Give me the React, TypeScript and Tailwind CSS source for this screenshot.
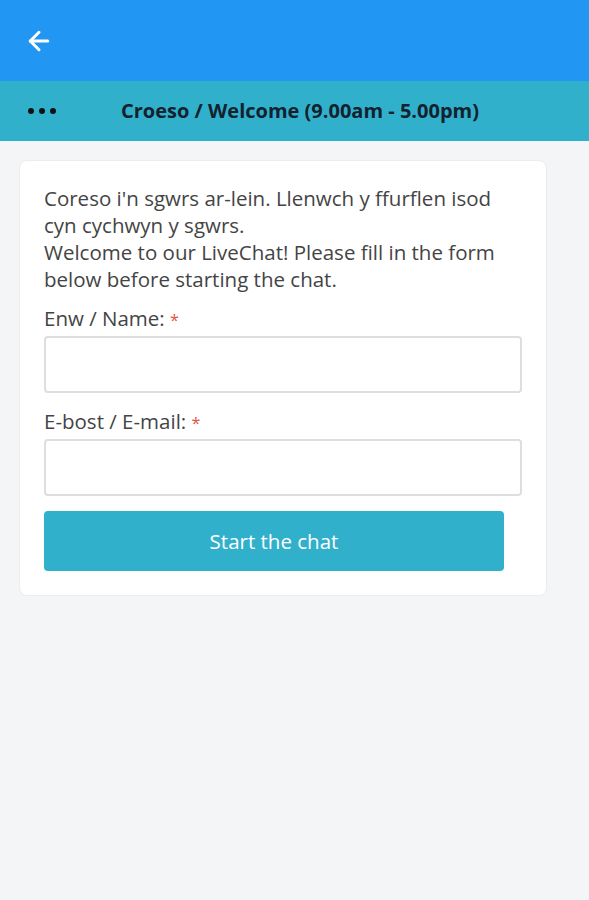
import { ArrowLeft } from 'lucide-react';

function Field({ label }: { label: string }) {
  return (
    <div className="flex flex-col">
      <label className="h-[27px] text-[20.5px] leading-[27px] text-[#444]">
        {label} <span className="text-[16px] leading-none text-[#e5533d]">*</span>
      </label>
      <input
        type="text"
        className="mt-[4px] h-[57px] w-full rounded-[4px] border-2 border-[#dedede] bg-white px-3 outline-none"
      />
    </div>
  );
}

export default function App() {
  return (
    <div className="min-h-[900px] bg-[#f4f5f7]" style={{ fontFamily: '"Open Sans", "Noto Sans", sans-serif' }}>
      {/* App bar */}
      <div className="flex h-[81px] items-center bg-[#2196f3] pl-[24px]">
        <ArrowLeft className="h-[30px] w-[30px] text-white" strokeWidth={2.4} />
      </div>

      {/* Chat header */}
      <div className="flex h-[60px] items-center bg-[#31b0cc]">
        <div className="flex w-[121px] items-center gap-[5px] pl-[28px]">
          <span className="h-[6px] w-[6px] rounded-full bg-[#111]" />
          <span className="h-[6px] w-[6px] rounded-full bg-[#111]" />
          <span className="h-[6px] w-[6px] rounded-full bg-[#111]" />
        </div>
        <p className="text-[20px] font-bold text-[#13222e]">Croeso / Welcome (9.00am - 5.00pm)</p>
      </div>

      {/* Form card */}
      <div className="px-[19px] pt-[19px]">
        <div className="w-[528px] rounded-[8px] border border-[#ececec] bg-white px-[24px] pt-[24px] pb-[24px]">
          <p className="text-[20.5px] leading-[27px] text-[#444]">
            Coreso i'n sgwrs ar-lein. Llenwch y ffurflen isod cyn cychwyn y sgwrs.
            <br />
            Welcome to our LiveChat! Please fill in the form below before starting the chat.
          </p>

          <div className="mt-[12px]">
            <Field label="Enw / Name:" />
          </div>
          <div className="mt-[15px]">
            <Field label="E-bost / E-mail:" />
          </div>

          <button className="mt-[15px] h-[60px] w-[460px] rounded-[4px] bg-[#31b0cc] text-[20.5px] text-white">
            Start the chat
          </button>
        </div>
      </div>
    </div>
  );
}
